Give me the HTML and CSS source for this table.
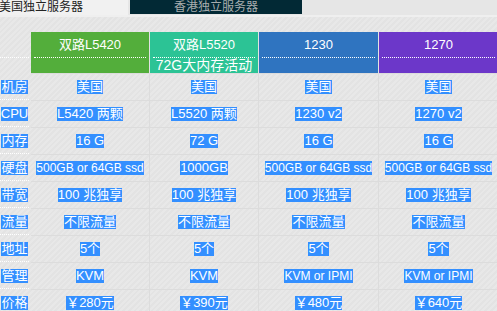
FILE: index.html
```html
<!DOCTYPE html>
<html lang="zh">
<head>
<meta charset="utf-8">
<title>服务器</title>
<link rel="stylesheet" href="styles.css">
</head>
<body>
<div class="tabs">
  <div class="tab tab-us">美国独立服务器</div>
  <div class="tab tab-hk">香港独立服务器</div>
</div>
<div class="band"></div>
<div class="table">
  <div class="lh"><div class="lh-top"></div></div>
  <div class="hd green"><div class="name">双路L5420</div><div class="sub"></div></div>
  <div class="hd teal"><div class="name">双路L5520</div><div class="sub">72G大内存活动</div></div>
  <div class="hd blue"><div class="name">1230</div><div class="sub"></div></div>
  <div class="hd purple"><div class="name">1270</div><div class="sub"></div></div>

  <div class="l"><span class="h">机房</span></div>
  <div class="c"><span class="h">美国</span></div>
  <div class="c"><span class="h">美国</span></div>
  <div class="c"><span class="h">美国</span></div>
  <div class="c"><span class="h">美国</span></div>

  <div class="l"><span class="h">CPU</span></div>
  <div class="c"><span class="h">L5420 两颗</span></div>
  <div class="c"><span class="h">L5520 两颗</span></div>
  <div class="c"><span class="h">1230 v2</span></div>
  <div class="c"><span class="h">1270 v2</span></div>

  <div class="l"><span class="h">内存</span></div>
  <div class="c"><span class="h">16 G</span></div>
  <div class="c"><span class="h">72 G</span></div>
  <div class="c"><span class="h">16 G</span></div>
  <div class="c"><span class="h">16 G</span></div>

  <div class="l"><span class="h">硬盘</span></div>
  <div class="c"><span class="h sm">500GB or 64GB ssd</span></div>
  <div class="c"><span class="h">1000GB</span></div>
  <div class="c"><span class="h sm">500GB or 64GB ssd</span></div>
  <div class="c"><span class="h sm">500GB or 64GB ssd</span></div>

  <div class="l"><span class="h">带宽</span></div>
  <div class="c"><span class="h">100 兆独享</span></div>
  <div class="c"><span class="h">100 兆独享</span></div>
  <div class="c"><span class="h">100 兆独享</span></div>
  <div class="c"><span class="h">100 兆独享</span></div>

  <div class="l"><span class="h">流量</span></div>
  <div class="c"><span class="h">不限流量</span></div>
  <div class="c"><span class="h">不限流量</span></div>
  <div class="c"><span class="h">不限流量</span></div>
  <div class="c"><span class="h">不限流量</span></div>

  <div class="l"><span class="h">地址</span></div>
  <div class="c"><span class="h">5个</span></div>
  <div class="c"><span class="h">5个</span></div>
  <div class="c"><span class="h">5个</span></div>
  <div class="c"><span class="h">5个</span></div>

  <div class="l"><span class="h">管理</span></div>
  <div class="c"><span class="h">KVM</span></div>
  <div class="c"><span class="h">KVM</span></div>
  <div class="c"><span class="h sm">KVM or IPMI</span></div>
  <div class="c"><span class="h sm">KVM or IPMI</span></div>

  <div class="l"><span class="h">价格</span></div>
  <div class="c"><span class="h">￥280元</span></div>
  <div class="c"><span class="h">￥390元</span></div>
  <div class="c"><span class="h">￥480元</span></div>
  <div class="c"><span class="h">￥640元</span></div>
</div>
</body>
</html>
```
FILE: styles.css
```css
html, body {
  margin: 0;
  padding: 0;
}
body {
  width: 497px;
  height: 311px;
  overflow: hidden;
  font-family: "Liberation Sans", "Noto Sans CJK SC", sans-serif;
  font-size: 13px;
  background: repeating-linear-gradient(135deg, #e8e8e8 0 2px, #e3e3e3 2px 4px);
}
.tabs {
  display: flex;
  height: 15px;
  background: #e6e6e6;
  font-size: 12px;
}
.tab {
  height: 15px;
  line-height: 14px;
  white-space: nowrap;
}
.tab-us {
  width: 128px;
  background: #f1f1f1;
  color: #222;
  margin-right: 2px;
  text-indent: -1px;
}
.tab-hk {
  width: 172px;
  height: 14px;
  background: #022935;
  color: #a7adae;
  text-align: center;
}
.band {
  height: 2px;
  background: #efefef;
}
.table {
  display: grid;
  grid-template-columns: 31px 119px 109px 120px 120px;
  margin-top: 15px;
}
.lh {
  height: 42px;
}
.lh-top {
  width: 29px;
  height: 25px;
  border-bottom: 1px dotted #fff;
}
.hd {
  height: 41px;
  border-right: 1px solid #e2e2e2;
  border-bottom: 1px solid #dcdcdc;
  color: #fff;
  text-align: center;
  white-space: nowrap;
}
.green { background: #53ae3b; }
.teal { background: #2cc395; }
.blue { background: #2f74c0; }
.purple { background: #6c37c9; }
.name {
  height: 25px;
  line-height: 25px;
  margin: 0 3px;
  border-bottom: 1px dotted #fff;
  font-size: 13px;
}
.sub {
  height: 15px;
  line-height: 15px;
  font-size: 14px;
}
.c {
  height: 26px;
  border-right: 1px solid #dcdcdc;
  border-bottom: 1px solid #dcdcdc;
  display: flex;
  align-items: center;
  justify-content: center;
  white-space: nowrap;
}
.l {
  width: 29px;
  height: 25px;
  margin-bottom: 1px;
  border-bottom: 1px dotted #fff;
  display: flex;
  align-items: center;
  justify-content: center;
  white-space: nowrap;
}
.h {
  display: inline-block;
  height: 14px;
  line-height: 14px;
  background: #338fff;
  color: #fff;
}
.sm {
  font-size: 12px;
}
```
